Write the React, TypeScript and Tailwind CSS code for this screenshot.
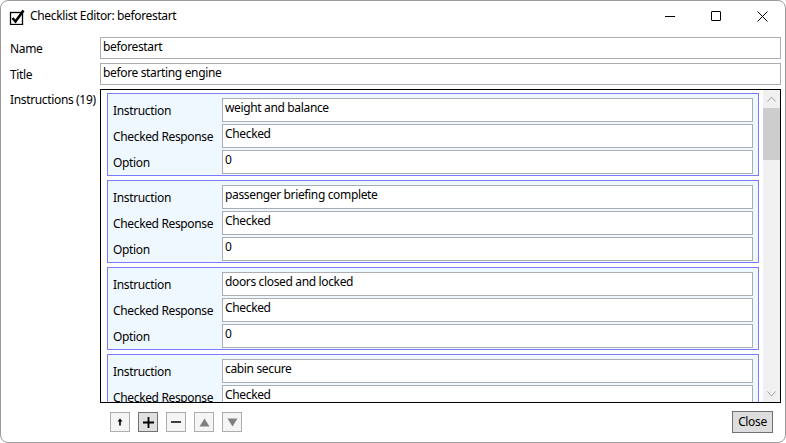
import React from "react";

type Step = {
    instruction: string;
    response: string;
    option: string;
};

const steps: Step[] = [
    { instruction: "weight and balance", response: "Checked", option: "0" },
    { instruction: "passenger briefing complete", response: "Checked", option: "0" },
    { instruction: "doors closed and locked", response: "Checked", option: "0" },
    { instruction: "cabin secure", response: "Checked", option: "0" },
    { instruction: "seats and seatbelts", response: "Adjusted and locked", option: "0" },
];

function Field({ value }: { value: string }) {
    return (
        <div className="h-[24px] border border-[#abadb3] bg-white px-[2px] pt-[1px] leading-[16px] text-black whitespace-nowrap overflow-hidden">
            {value}
        </div>
    );
}

function StepCard({ step }: { step: Step }) {
    const rows: [string, string][] = [
        ["Instruction", step.instruction],
        ["Checked Response", step.response],
        ["Option", step.option],
    ];
    return (
        <div className="shrink-0 border border-[#7b7bff] bg-[#f0f8ff] pl-[5px] pr-[5px] pt-[4px] pb-[1px] flex flex-col gap-[2px]">
            {rows.map(([label, value]) => (
                <div key={label} className="flex items-center">
                    <div className="w-[109px] shrink-0 pt-[2px] leading-[16px] text-black whitespace-nowrap">{label}</div>
                    <div className="flex-1">
                        <Field value={value} />
                    </div>
                </div>
            ))}
        </div>
    );
}

function Chevron({ up }: { up?: boolean }) {
    return (
        <svg width="9" height="6" viewBox="0 0 9 6" className="text-[#a0a0a0]">
            <path d={up ? "M0.5 5.5 L4.5 1 L8.5 5.5" : "M0.5 0.5 L4.5 5 L8.5 0.5"} fill="none" stroke="currentColor" strokeWidth="1" />
        </svg>
    );
}

function SmallButton({ children, active }: { children: React.ReactNode; active?: boolean }) {
    return (
        <button
            className={
                active
                    ? "w-[20px] h-[20px] flex items-center justify-center border border-[#707070] bg-[#e0e0e0] text-black"
                    : "w-[20px] h-[20px] flex items-center justify-center border border-[#adadad] bg-[#f5f5f5] text-black"
            }
        >
            {children}
        </button>
    );
}

export default function App() {
    return (
        <div className="w-[786px] h-[443px] box-border border border-[#9c9c9c] rounded-[8px] bg-white overflow-hidden flex flex-col font-['Noto_Sans',sans-serif] text-[12px] tracking-[-0.35px] text-black">
            {/* title bar */}
            <div className="h-[30px] shrink-0 flex items-center">
                <svg width="16" height="16" viewBox="0 0 16 16" className="ml-[8px] mt-[1px]">
                    <rect x="1.5" y="3.5" width="12" height="12" fill="white" stroke="black" strokeWidth="1.3" />
                    <path d="M3.5 9 L6.5 12.5 L14.5 1.5" fill="none" stroke="black" strokeWidth="2.6" />
                </svg>
                <div className="ml-[5px] leading-[16px]">Checklist Editor: beforestart</div>
                <div className="ml-auto flex h-full">
                    <div className="w-[46px] h-full flex items-center justify-center">
                        <div className="w-[10px] h-[1px] bg-black" />
                    </div>
                    <div className="w-[46px] h-full flex items-center justify-center">
                        <div className="w-[10px] h-[10px] border border-black rounded-[1px]" />
                    </div>
                    <div className="w-[46px] h-full flex items-center justify-center">
                        <svg width="11" height="11" viewBox="0 0 11 11">
                            <path d="M0.5 0.5 L10.5 10.5 M10.5 0.5 L0.5 10.5" stroke="black" strokeWidth="1" />
                        </svg>
                    </div>
                </div>
            </div>

            {/* form */}
            <div className="flex flex-col pl-[9px] pr-[4px]">
                <div className="flex items-center mt-[6px] h-[22px]">
                    <div className="w-[90px] shrink-0 pt-[1px] leading-[16px]">Name</div>
                    <div className="flex-1 h-[22px] border border-[#abadb3] px-[2px] pt-[1px] leading-[16px]">beforestart</div>
                </div>
                <div className="flex items-center mt-[4px] h-[22px]">
                    <div className="w-[90px] shrink-0 pt-[1px] leading-[16px]">Title</div>
                    <div className="flex-1 h-[22px] border border-[#abadb3] px-[2px] pt-[1px] leading-[16px]">before starting engine</div>
                </div>
                <div className="flex mt-[4px] h-[314px]">
                    <div className="w-[90px] shrink-0 pt-[3px] leading-[16px] whitespace-nowrap">Instructions (19)</div>
                    <div className="flex-1 border border-black flex min-w-0">
                        <div className="flex-1 overflow-hidden pl-[6px] pr-[4px] pt-[3px] flex flex-col gap-[4px]">
                            {steps.map((s, i) => (
                                <StepCard key={i} step={s} />
                            ))}
                        </div>
                        <div className="w-[17px] shrink-0 bg-[#f0f0f0] flex flex-col">
                            <div className="h-[17px] flex items-center justify-center">
                                <Chevron up />
                            </div>
                            <div className="h-[52px] mt-[1px] bg-[#cdcdcd]" />
                            <div className="flex-1" />
                            <div className="h-[17px] flex items-center justify-center">
                                <Chevron />
                            </div>
                        </div>
                    </div>
                </div>

                {/* bottom toolbar */}
                <div className="flex items-center mt-[8px] h-[22px]">
                    <div className="ml-[100px] flex gap-[8px]">
                        <SmallButton>
                            <svg width="6" height="8" viewBox="0 0 6 8">
                                <path d="M3 0.5 L5.5 3.5 L3.8 3.5 L3.8 7.5 L2.2 7.5 L2.2 3.5 L0.5 3.5 Z" fill="black" />
                            </svg>
                        </SmallButton>
                        <SmallButton active>
                            <svg width="11" height="11" viewBox="0 0 11 11">
                                <path d="M5.5 0 V11 M0 5.5 H11" stroke="black" strokeWidth="1.8" />
                            </svg>
                        </SmallButton>
                        <SmallButton>
                            <svg width="10" height="10" viewBox="0 0 10 10">
                                <path d="M0 5 H10" stroke="#404040" strokeWidth="1.8" />
                            </svg>
                        </SmallButton>
                        <SmallButton>
                            <svg width="11" height="9" viewBox="0 0 11 9">
                                <path d="M5.5 0.5 L10.5 8.5 L0.5 8.5 Z" fill="#808080" />
                            </svg>
                        </SmallButton>
                        <SmallButton>
                            <svg width="11" height="9" viewBox="0 0 11 9">
                                <path d="M0.5 0.5 L10.5 0.5 L5.5 8.5 Z" fill="#808080" />
                            </svg>
                        </SmallButton>
                    </div>
                    <button className="ml-auto mr-[8px] w-[41px] h-[22px] border border-[#707070] bg-[#dddddd] leading-[16px] text-black">
                        Close
                    </button>
                </div>
            </div>
        </div>
    );
}
